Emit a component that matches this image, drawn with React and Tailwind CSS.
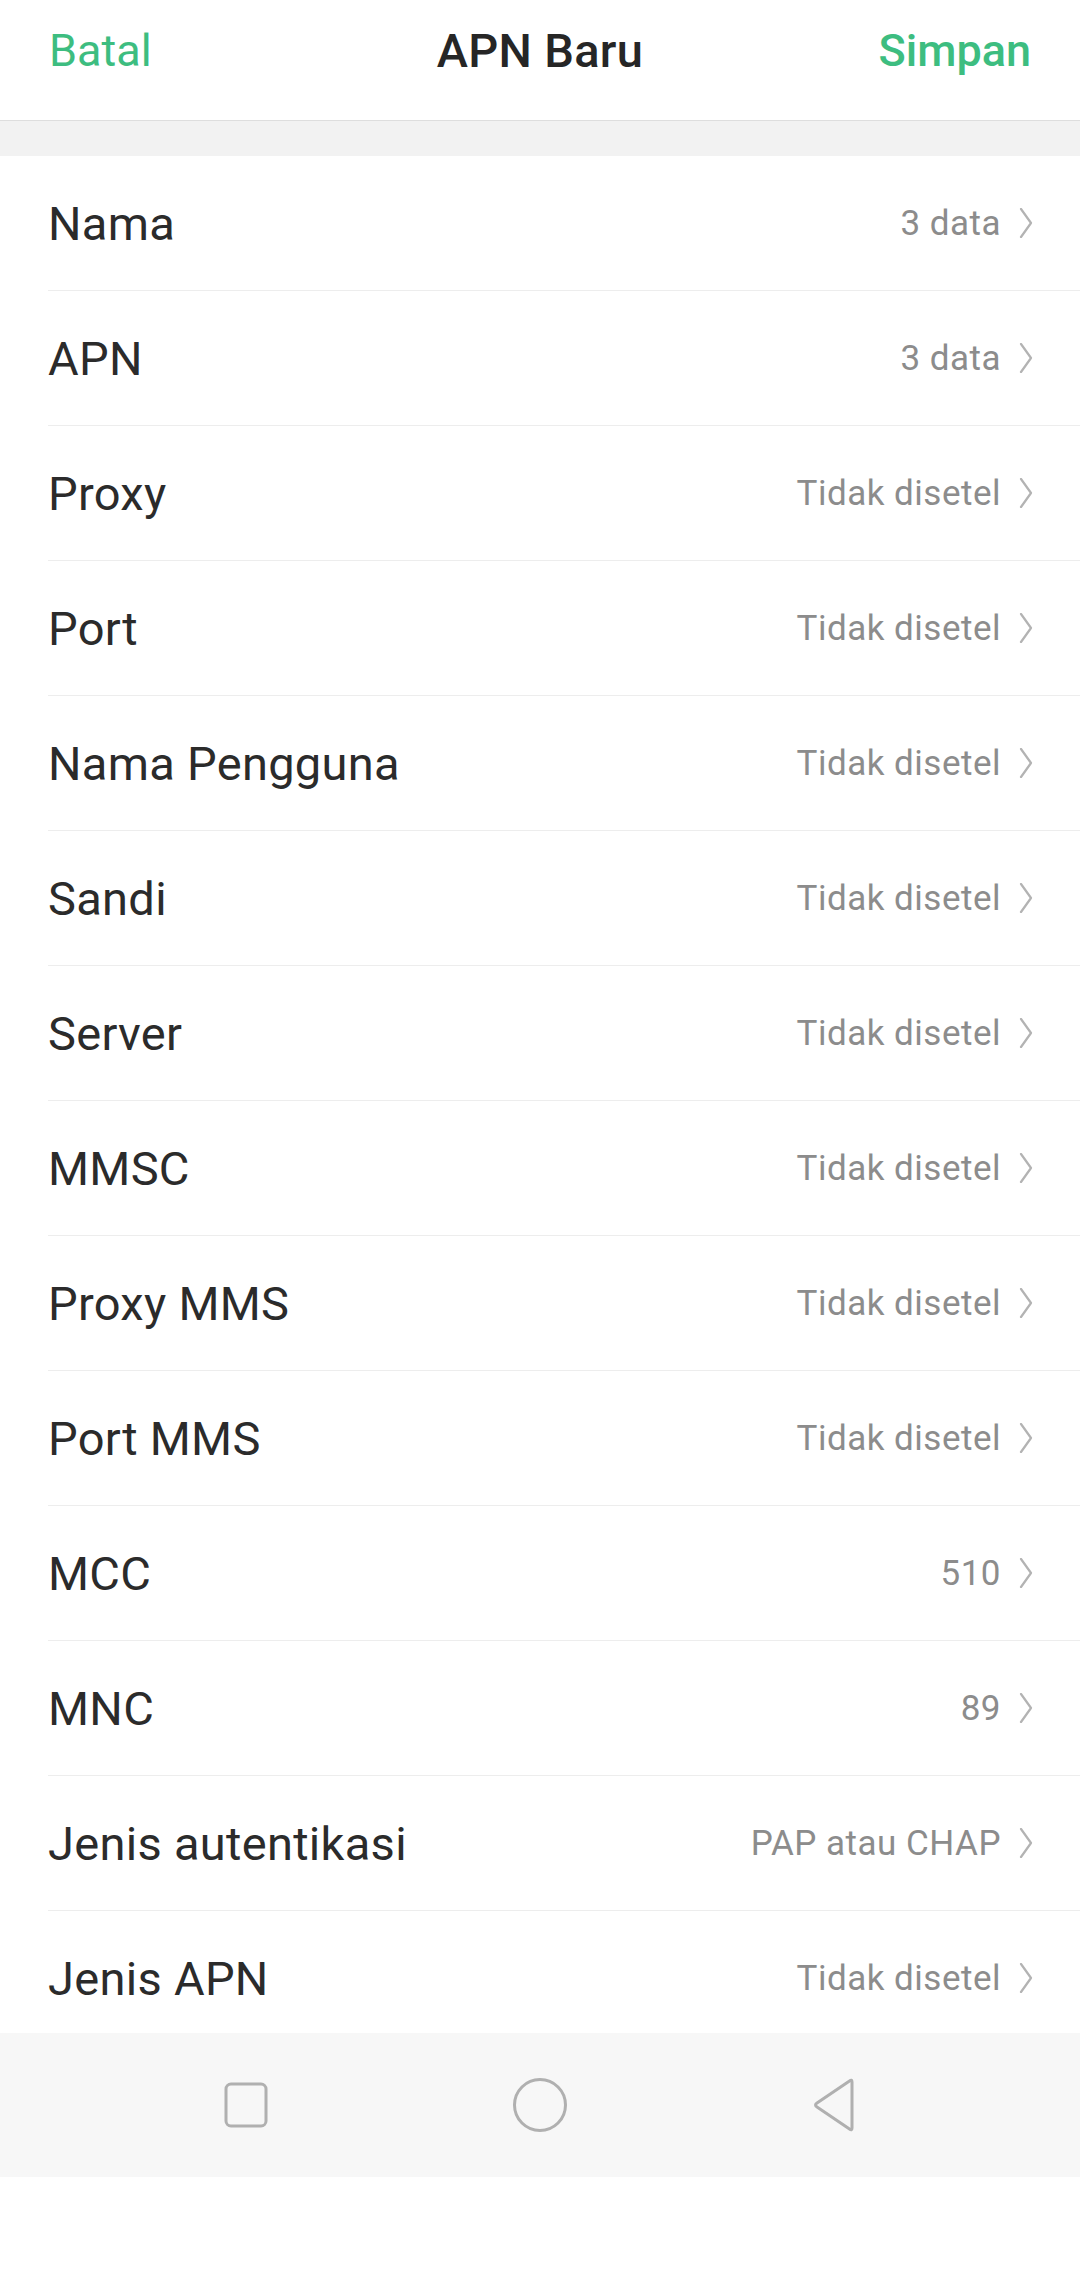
import React from "react";

const rows = [
  ["Nama", "3 data"],
  ["APN", "3 data"],
  ["Proxy", "Tidak disetel"],
  ["Port", "Tidak disetel"],
  ["Nama Pengguna", "Tidak disetel"],
  ["Sandi", "Tidak disetel"],
  ["Server", "Tidak disetel"],
  ["MMSC", "Tidak disetel"],
  ["Proxy MMS", "Tidak disetel"],
  ["Port MMS", "Tidak disetel"],
  ["MCC", "510"],
  ["MNC", "89"],
  ["Jenis autentikasi", "PAP atau CHAP"],
  ["Jenis APN", "Tidak disetel"],
];

function Chevron() {
  return (
    <svg width="14" height="30" viewBox="0 0 14 30" className="shrink-0">
      <path d="M2 1 L12 15 L2 29" fill="none" stroke="#b3b3b3" strokeWidth="2.2" strokeLinecap="round" strokeLinejoin="round" />
    </svg>
  );
}

export default function App() {
  return (
    <div className="w-[1080px] h-[2280px] flex flex-col bg-white overflow-hidden" style={{ fontFamily: "Roboto, 'Noto Sans', sans-serif" }}>
      <div className="h-[121px] shrink-0 flex items-center justify-between px-[49px] border-b border-[#dedede] bg-white">
        <span className="text-[45px] text-[#3dbd80] leading-none pb-[20px] w-[200px]">Batal</span>
        <span className="text-[47px] text-[#262626] font-medium leading-none pb-[20px] tracking-[0.3px]">APN Baru</span>
        <span className="text-[45px] text-[#3dbd80] font-medium leading-none pb-[20px] w-[200px] text-right">Simpan</span>
      </div>
      <div className="h-[35px] shrink-0 bg-[#f2f2f2]" />
      <div className="flex-1 overflow-hidden">
        {rows.map(([label, value]) => (
          <div key={label} className="pl-[48px]">
            <div className="h-[135px] flex items-center justify-between pr-[47px] border-b border-[#ededed]">
              <span className="text-[47px] text-[#2b2b2b] leading-none tracking-[0.3px]">{label}</span>
              <div className="flex items-center gap-[18px]">
                <span className="text-[35px] text-[#8c8c8c] leading-none tracking-[0.5px]">{value}</span>
                <Chevron />
              </div>
            </div>
          </div>
        ))}
      </div>
      <div className="h-[144px] shrink-0 bg-[#f7f7f7] flex items-center justify-center">
        <div className="w-[294px] flex justify-center">
          <svg width="44" height="46" viewBox="0 0 44 46">
            <rect x="2" y="2" width="40" height="42" rx="5" fill="none" stroke="#b0b0b0" strokeWidth="3" />
          </svg>
        </div>
        <div className="w-[294px] flex justify-center">
          <svg width="56" height="56" viewBox="0 0 56 56">
            <circle cx="28" cy="28" r="25.5" fill="none" stroke="#b0b0b0" strokeWidth="3" />
          </svg>
        </div>
        <div className="w-[294px] flex justify-center">
          <svg width="48" height="56" viewBox="0 0 48 56">
            <path d="M42 5 Q42 2 39.5 4 L7 26 Q4 28 7 30 L39.5 52 Q42 54 42 51 Z" fill="none" stroke="#b0b0b0" strokeWidth="3" strokeLinejoin="round" />
          </svg>
        </div>
      </div>
      <div className="h-[103px] shrink-0 bg-white" />
    </div>
  );
}
